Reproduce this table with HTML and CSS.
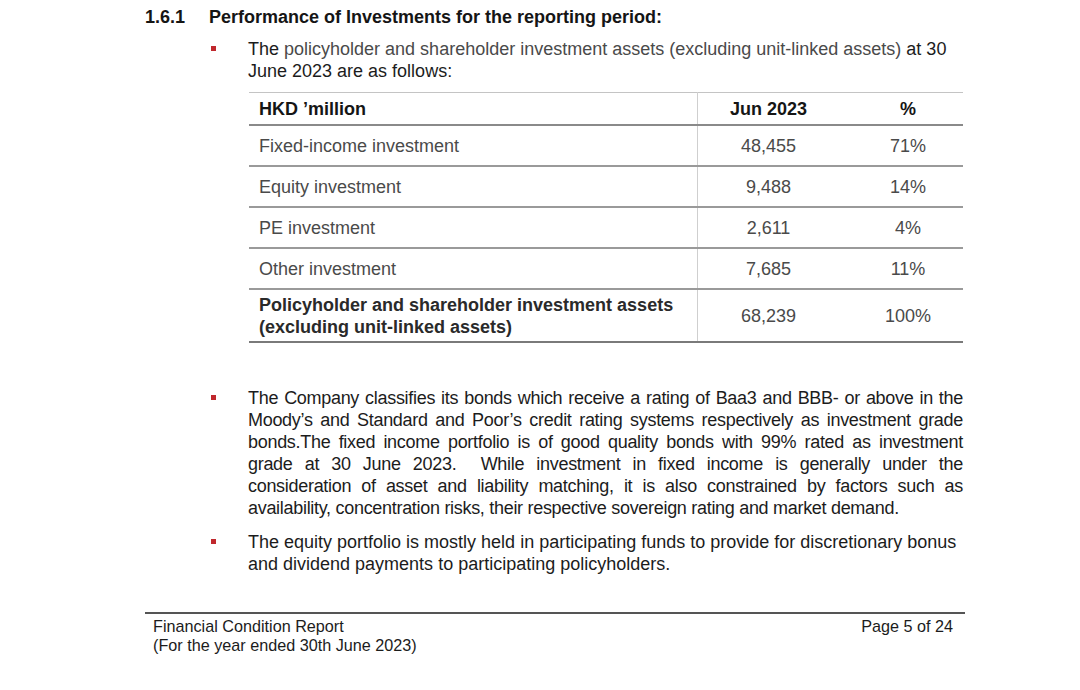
FILE: index.html
```html
<!DOCTYPE html>
<html>
<head>
<meta charset="utf-8">
<link rel="stylesheet" href="styles.css">
</head>
<body>
<div class="page">
  <div class="heading">
    <span class="num">1.6.1</span>
    <span class="title">Performance of Investments for the reporting period:</span>
  </div>
  <ul class="bullets">
    <li class="item first">
      <p>The <span class="soft">policyholder and shareholder investment assets (excluding unit-linked assets)</span> at 30 June 2023 are as follows:</p>
      <table class="inv">
        <thead>
          <tr><th class="c1">HKD ’million</th><th class="c2">Jun 2023</th><th class="c3">%</th></tr>
        </thead>
        <tbody>
          <tr><td class="c1">Fixed-income investment</td><td class="c2">48,455</td><td class="c3">71%</td></tr>
          <tr><td class="c1">Equity investment</td><td class="c2">9,488</td><td class="c3">14%</td></tr>
          <tr><td class="c1">PE investment</td><td class="c2">2,611</td><td class="c3">4%</td></tr>
          <tr><td class="c1">Other investment</td><td class="c2">7,685</td><td class="c3">11%</td></tr>
          <tr class="total"><td class="c1"><b>Policyholder and shareholder investment assets (excluding unit-linked assets)</b></td><td class="c2">68,239</td><td class="c3">100%</td></tr>
        </tbody>
      </table>
    </li>
    <li class="item second">
      <p class="just">The Company classifies its bonds which receive a rating of Baa3 and BBB- or above in the Moody’s and Standard and Poor’s credit rating systems respectively as investment grade bonds.The fixed income portfolio is of good quality bonds with 99% rated as investment grade at 30 June 2023.&nbsp; While investment in fixed income is generally under the consideration of asset and liability matching, it is also constrained by factors such as availability, concentration risks, their respective sovereign rating and market demand.</p>
    </li>
    <li class="item third">
      <p>The equity portfolio is mostly held in participating funds to provide for discretionary bonus and dividend payments to participating policyholders.</p>
    </li>
  </ul>
  <div class="footer">
    <div class="fleft">Financial Condition Report<br>(For the year ended 30th June 2023)</div>
    <div class="fright">Page 5 of 24</div>
  </div>
</div>
</body>
</html>
```

FILE: styles.css
```css
html, body {
  margin: 0;
  padding: 0;
  background: #ffffff;
}
body {
  font-family: "Liberation Sans", Arial, sans-serif;
  color: #1c1c1c;
  width: 1080px;
  height: 690px;
  overflow: hidden;
}
.page {
  padding: 6px 0 0 145px;
  width: 820px;
}
.heading {
  display: flex;
  font-size: 18px;
  font-weight: bold;
  line-height: 22px;
  color: #151515;
}
.num {
  width: 64px;
  flex: none;
}
.bullets {
  list-style: none;
  margin: 10px 0 0 0;
  padding: 0 0 0 103px;
  width: 715px;
}
.item {
  position: relative;
}
.item::before {
  content: "";
  position: absolute;
  left: -37px;
  top: 8px;
  width: 5px;
  height: 5px;
  background: #c0282d;
}
.item p {
  margin: 0;
  font-size: 18px;
  line-height: 22px;
}
.soft {
  color: #4a4a4a;
}
.just {
  text-align: justify;
  letter-spacing: -0.3px;
}
.second {
  margin-top: 44px;
}
.third {
  margin-top: 12px;
}
.inv {
  margin: 10px 0 0 1px;
  width: 714px;
  border-collapse: collapse;
  font-size: 18px;
  color: #4a4a4a;
}
.inv th {
  font-weight: bold;
  color: #151515;
  height: 32px;
  padding: 3px 10px 0;
  box-sizing: border-box;
  border-top: 1px solid #c4c4c4;
  border-bottom: 2px solid #8a8a8a;
}
.inv td {
  height: 38px;
  padding: 1px 10px 0;
  border-bottom: 2px solid #9a9a9a;
  line-height: 22px;
}
.inv .c1 {
  text-align: left;
  width: 428px;
  border-right: 1px solid #cfcfcf;
}
.inv .c2 {
  text-align: center;
  width: 121px;
}
.inv .c3 {
  text-align: center;
}
.inv th.c3 {
  padding-left: 24px;
}
.inv td.c3 {
  padding-left: 24px;
}
.inv tr.total td {
  height: 50px;
  border-bottom: 2px solid #7a7a7a;
}
.inv tr.total b {
  color: #2a2a2a;
}
.footer {
  margin-top: 37px;
  border-top: 2px solid #555;
  width: 820px;
  display: flex;
  justify-content: space-between;
  font-size: 16.2px;
  line-height: 19px;
  color: #1c1c1c;
  padding-top: 3px;
}
.fleft {
  padding-left: 8px;
}
.fright {
  padding-right: 12px;
}
```
